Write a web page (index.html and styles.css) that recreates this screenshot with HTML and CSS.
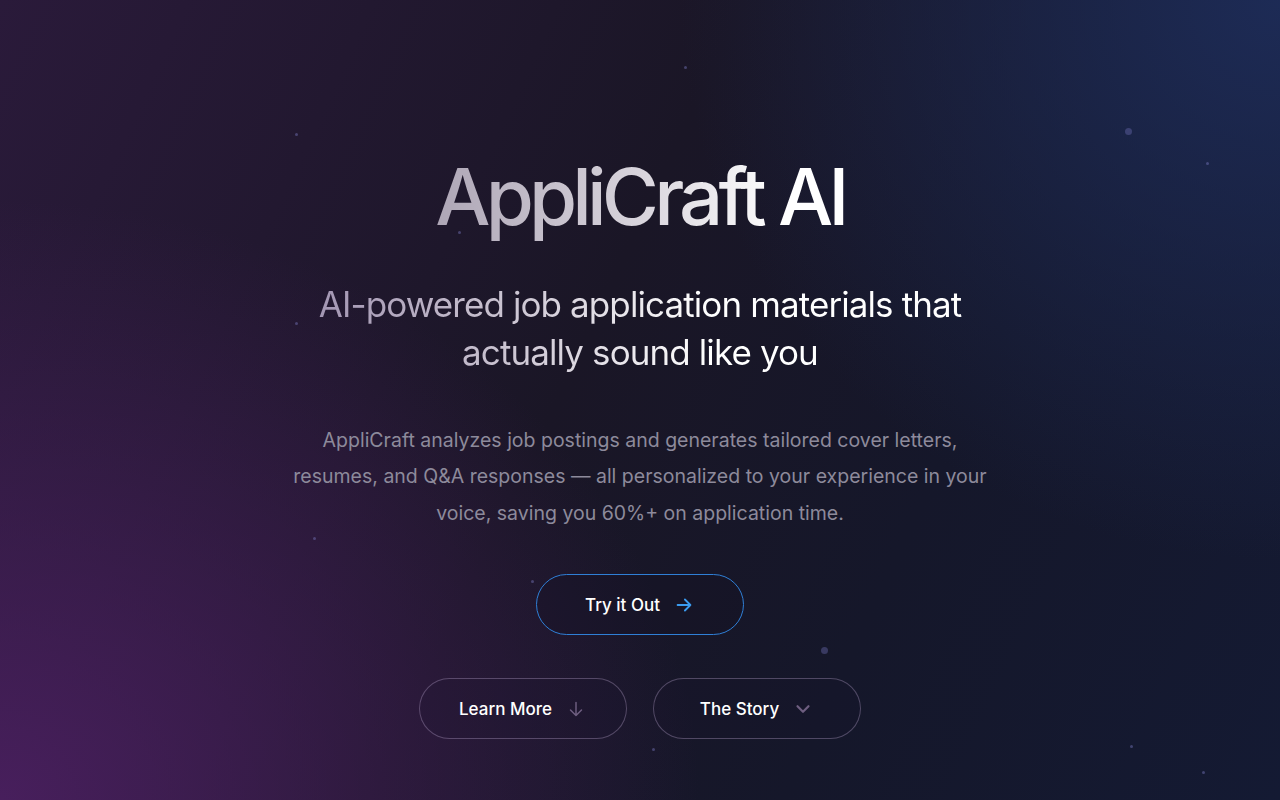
FILE: index.html
```html
<!DOCTYPE html>
<html lang="en">
<head>
<meta charset="utf-8">
<title>AppliCraft AI</title>
<link rel="stylesheet" href="styles.css">
</head>
<body>
<main class="hero">
  <div class="particles">
    <span class="dot" style="left:684px;top:66px"></span>
    <span class="dot big" style="left:1125px;top:128px"></span>
    <span class="dot" style="left:1206px;top:162px"></span>
    <span class="dot" style="left:295px;top:133px"></span>
    <span class="dot" style="left:458px;top:231px"></span>
    <span class="dot" style="left:295px;top:322px"></span>
    <span class="dot" style="left:313px;top:537px"></span>
    <span class="dot" style="left:531px;top:580px"></span>
    <span class="dot big" style="left:821px;top:647px"></span>
    <span class="dot" style="left:652px;top:748px"></span>
    <span class="dot" style="left:1130px;top:745px"></span>
    <span class="dot" style="left:1202px;top:771px"></span>
  </div>
  <section class="content">
    <h1 class="title">AppliCraft AI</h1>
    <h2 class="subtitle">AI-powered job application materials that actually sound like you</h2>
    <p class="lead">AppliCraft analyzes job postings and generates tailored cover letters, resumes, and Q&amp;A responses — all personalized to your experience in your voice, saving you 60%+ on application time.</p>
    <div class="primary-row">
      <a class="btn btn-primary" href="#">Try it Out
        <svg class="icon icon-blue" viewBox="0 0 24 24" width="22" height="22"><path d="M5 12h14M13 6l6 6-6 6" fill="none" stroke="currentColor" stroke-width="2" stroke-linecap="round" stroke-linejoin="round"/></svg>
      </a>
    </div>
    <div class="secondary-row">
      <a class="btn btn-ghost" href="#">Learn More
        <svg class="icon icon-muted" viewBox="0 0 24 24" width="22" height="22"><path d="M12 5v14M6 13l6 6 6-6" fill="none" stroke="currentColor" stroke-width="1.6" stroke-linecap="round" stroke-linejoin="round"/></svg>
      </a>
      <a class="btn btn-ghost" href="#">The Story
        <svg class="icon icon-muted" viewBox="0 0 24 24" width="22" height="22"><path d="M6 9l6 6 6-6" fill="none" stroke="currentColor" stroke-width="2.4" stroke-linecap="round" stroke-linejoin="round"/></svg>
      </a>
    </div>
  </section>
</main>
</body>
</html>
```

FILE: styles.css
```css
* { box-sizing: border-box; }
html, body { margin: 0; padding: 0; }
body {
  font-family: Inter, "Noto Sans", "Liberation Sans", sans-serif;
  background: #16141f;
  color: #fff;
  width: 1280px;
  height: 800px;
  overflow: hidden;
}
.hero {
  position: relative;
  width: 1280px;
  height: 800px;
  overflow: hidden;
  background:
    radial-gradient(ellipse 700px 600px at 0% 100%, rgba(78, 32, 100, 0.85), rgba(78, 32, 100, 0) 100%),
    radial-gradient(ellipse 600px 560px at 100% 0%, rgba(30, 45, 90, 0.9), rgba(30, 45, 90, 0) 100%),
    linear-gradient(115deg, #2a1a3a 0%, #1a1626 45%, #15172a 70%, #141a33 100%);
}
.particles { position: absolute; inset: 0; pointer-events: none; }
.dot {
  position: absolute;
  width: 3px; height: 3px;
  border-radius: 50%;
  background: rgba(120, 120, 190, 0.45);
}
.dot.big { width: 7px; height: 7px; background: rgba(110, 110, 180, 0.4); }

.content {
  position: relative;
  display: flex;
  flex-direction: column;
  align-items: center;
  text-align: center;
  padding-top: 152px;
}
.title {
  margin: 0;
  font-size: 78px;
  font-weight: 500;
  letter-spacing: -4.9px;
  line-height: 90px;
  background: linear-gradient(90deg, #aea6b6 0%, #d8d4dc 50%, #ffffff 85%);
  -webkit-background-clip: text;
  background-clip: text;
  color: transparent;
}
.subtitle {
  margin: 38px 0 0;
  width: 700px;
  font-size: 35px;
  font-weight: 400;
  letter-spacing: -0.9px;
  line-height: 48px;
  background: linear-gradient(90deg, #9d8fae 0%, #c9c2d0 30%, #ffffff 60%);
  -webkit-background-clip: text;
  background-clip: text;
  color: transparent;
}
.lead {
  margin: 46px 0 0;
  width: 700px;
  font-size: 19.5px;
  line-height: 36.4px;
  color: #8d8a9b;
}
.primary-row { margin-top: 43px; display: flex; justify-content: center; }
.secondary-row { margin-top: 43px; display: flex; justify-content: center; gap: 26px; }
.btn {
  display: inline-flex;
  align-items: center;
  justify-content: center;
  gap: 13px;
  width: 208px;
  height: 61px;
  border-radius: 999px;
  text-decoration: none;
  color: #fff;
  font-size: 17px;
  font-weight: 500;
}
.btn-primary {
  border: 1.5px solid #2f7fd6;
  background: rgba(20, 18, 38, 0.3);
}
.btn-ghost {
  border: 1px solid rgba(190, 170, 210, 0.35);
  background: rgba(30, 20, 45, 0.15);
}
.icon { flex: none; }
.icon-blue { color: #3b9cf0; }
.icon-muted { color: #6e5e80; }
```
